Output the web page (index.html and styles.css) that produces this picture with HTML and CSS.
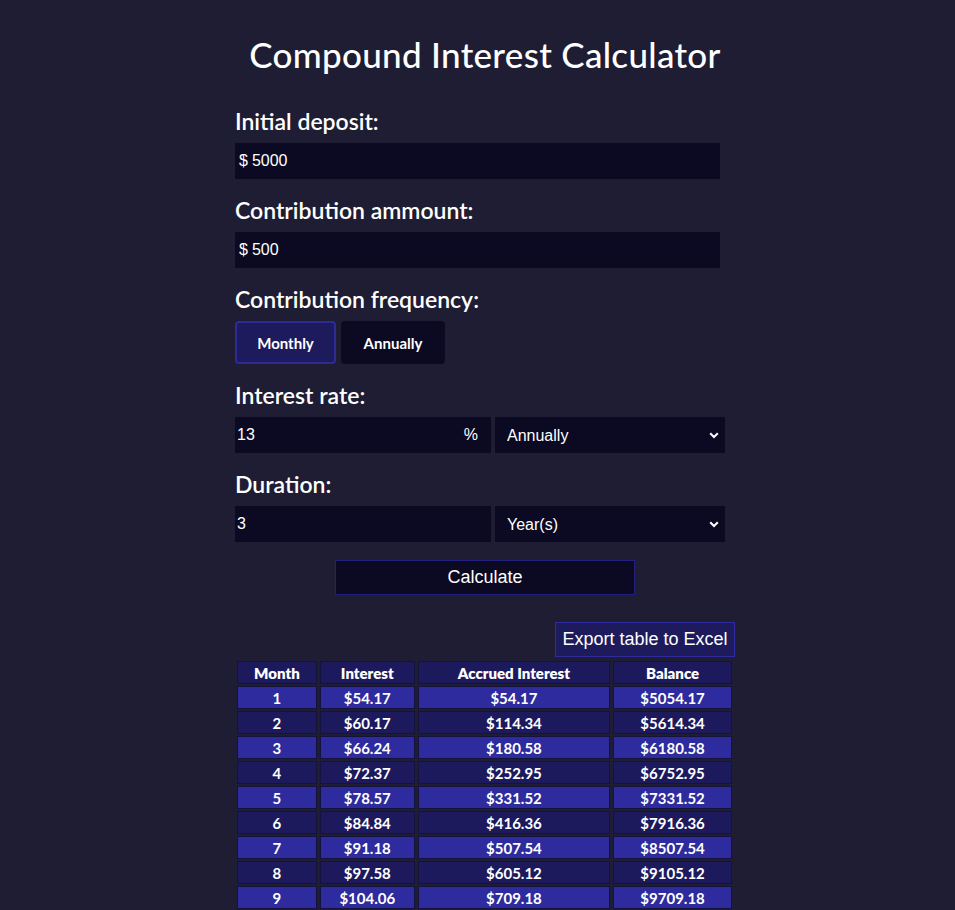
FILE: index.html
```html
<!DOCTYPE html>
<html lang="en">
<head>
<meta charset="utf-8">
<title>Compound Interest Calculator</title>
<link rel="stylesheet" href="styles.css">
</head>
<body>
<main class="app">
  <h1 class="title">Compound Interest Calculator</h1>

  <label class="label">Initial deposit:</label>
  <div class="field field-full"><span class="prefix">$</span><input class="input" type="text" value="5000"></div>

  <label class="label">Contribution ammount:</label>
  <div class="field field-full"><span class="prefix">$</span><input class="input" type="text" value="500"></div>

  <label class="label">Contribution frequency:</label>
  <div class="toggle-row">
    <button class="toggle active">Monthly</button>
    <button class="toggle">Annually</button>
  </div>

  <label class="label">Interest rate:</label>
  <div class="pair">
    <div class="field field-half"><input class="input" type="text" value="13"><span class="suffix">%</span></div>
    <div class="select-wrap">
      <select class="select"><option>Annually</option></select>
      <svg class="chev" width="10" height="7" viewBox="0 0 10 7"><path d="M1.2 1.2 L5 5 L8.8 1.2" fill="none" stroke="#fff" stroke-width="2"/></svg>
    </div>
  </div>

  <label class="label">Duration:</label>
  <div class="pair">
    <div class="field field-half"><input class="input" type="text" value="3"></div>
    <div class="select-wrap">
      <select class="select"><option>Year(s)</option></select>
      <svg class="chev" width="10" height="7" viewBox="0 0 10 7"><path d="M1.2 1.2 L5 5 L8.8 1.2" fill="none" stroke="#fff" stroke-width="2"/></svg>
    </div>
  </div>

  <div class="calc-row"><button class="calc">Calculate</button></div>

  <div class="export-row"><button class="export">Export table to Excel</button></div>

  <table class="table">
    <thead>
      <tr><th class="c1">Month</th><th class="c2">Interest</th><th class="c3">Accrued Interest</th><th class="c4">Balance</th></tr>
    </thead>
    <tbody>
      <tr class="odd"><td>1</td><td>$54.17</td><td>$54.17</td><td>$5054.17</td></tr>
      <tr class="even"><td>2</td><td>$60.17</td><td>$114.34</td><td>$5614.34</td></tr>
      <tr class="odd"><td>3</td><td>$66.24</td><td>$180.58</td><td>$6180.58</td></tr>
      <tr class="even"><td>4</td><td>$72.37</td><td>$252.95</td><td>$6752.95</td></tr>
      <tr class="odd"><td>5</td><td>$78.57</td><td>$331.52</td><td>$7331.52</td></tr>
      <tr class="even"><td>6</td><td>$84.84</td><td>$416.36</td><td>$7916.36</td></tr>
      <tr class="odd"><td>7</td><td>$91.18</td><td>$507.54</td><td>$8507.54</td></tr>
      <tr class="even"><td>8</td><td>$97.58</td><td>$605.12</td><td>$9105.12</td></tr>
      <tr class="odd"><td>9</td><td>$104.06</td><td>$709.18</td><td>$9709.18</td></tr>
      <tr class="even"><td>10</td><td>$110.62</td><td>$819.80</td><td>$10319.80</td></tr>
    </tbody>
  </table>
</main>
</body>
</html>
```

FILE: styles.css
```css
html, body {
  margin: 0;
  padding: 0;
  background: #1e1d33;
  color: #ffffff;
  font-family: "Lato", "Noto Sans", sans-serif;
}

.app {
  width: 500px;
  margin-left: 235px;
  display: flex;
  flex-direction: column;
  align-items: flex-start;
}

.title {
  align-self: stretch;
  text-align: center;
  font-size: 35px;
  font-weight: 500;
  margin: 31px 0 13px 0;
  line-height: 46px;
  letter-spacing: 0.3px;
}

.label {
  display: block;
  font-size: 23px;
  font-weight: 600;
  line-height: 28px;
  margin-top: 17px;
  margin-bottom: 8px;
}

.field {
  display: flex;
  align-items: center;
  background: #0b0a22;
  height: 36px;
  box-sizing: border-box;
  font-family: "Liberation Sans", Arial, sans-serif;
  font-size: 16px;
}

.field-full { width: 485px; }
.field-half { width: 256px; }

.prefix {
  padding-left: 4px;
  padding-right: 2px;
}

.suffix {
  padding-right: 13px;
}

.input {
  flex: 1;
  min-width: 0;
  background: transparent;
  border: none;
  outline: none;
  color: #ffffff;
  font-family: "Liberation Sans", Arial, sans-serif;
  font-size: 16px;
  padding: 0 2px;
  height: 100%;
}

.toggle-row {
  display: flex;
  gap: 5px;
}

.toggle {
  height: 43px;
  border-radius: 4px;
  border: 2px solid #0b0a22;
  background: #0b0a22;
  color: #ffffff;
  font-family: "Lato", "Noto Sans", sans-serif;
  font-size: 15px;
  font-weight: 700;
  padding: 0;
  width: 104px;
}

.toggle.active {
  width: 101px;
  background: #1d1b5c;
  border-color: #2d2b96;
}

.pair {
  display: flex;
  gap: 4px;
}

.select-wrap {
  position: relative;
  width: 230px;
  height: 36px;
}

.select {
  appearance: none;
  -webkit-appearance: none;
  width: 100%;
  height: 100%;
  background: #0b0a22;
  border: none;
  outline: none;
  color: #ffffff;
  font-family: "Liberation Sans", Arial, sans-serif;
  font-size: 16px;
  padding: 0 0 0 12px;
}

.chev {
  position: absolute;
  right: 6px;
  top: 15px;
  pointer-events: none;
}

.calc-row {
  align-self: stretch;
  display: flex;
  margin-top: 18px;
}

.calc {
  margin-left: 100px;
  width: 300px;
  height: 35px;
  background: #0b0a22;
  border: 1px solid #221f80;
  color: #ffffff;
  font-family: "Liberation Sans", Arial, sans-serif;
  font-size: 18px;
}

.export-row {
  align-self: stretch;
  display: flex;
  justify-content: flex-end;
  margin-top: 27px;
}

.export {
  height: 35px;
  width: 180px;
  background: #1d1b5c;
  border: 1px solid #2e2ca0;
  color: #ffffff;
  font-family: "Liberation Sans", Arial, sans-serif;
  font-size: 18px;
  padding: 0;
}

.table {
  margin-top: 2px;
  margin-left: -1px;
  border-collapse: separate;
  border-spacing: 3px 2px;
  font-family: "Lato", "Noto Sans", sans-serif;
  font-size: 15px;
  font-weight: 700;
}

.table th, .table td {
  height: 23px;
  box-sizing: border-box;
  padding: 0;
  text-align: center;
  border: 1px solid #14133d;
}

.table th {
  background: #1c1a5c;
  font-weight: 800;
}

.c1 { width: 80px; }
.c2 { width: 95px; }
.c3 { width: 193px; }
.c4 { width: 119px; }

.odd td { background: #2e2b9e; }
.even td { background: #1c1a5c; }
```
